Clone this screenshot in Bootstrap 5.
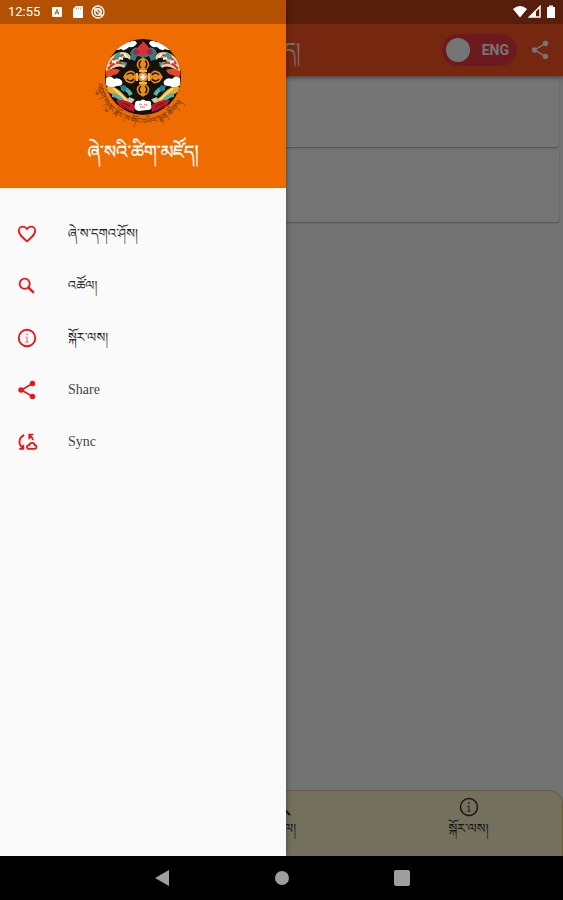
<!DOCTYPE html>
<html lang="dz">
<head>
<meta charset="utf-8">
<meta name="viewport" content="width=device-width, initial-scale=1">
<title>Dzongkha Dictionary</title>
<link href="https://cdn.jsdelivr.net/npm/bootstrap@5.3.0/dist/css/bootstrap.min.css" rel="stylesheet">
<style>
body{font-family:"Liberation Serif","Noto Serif Tibetan","Noto Sans Tibetan",serif;background:#000}
svg{display:block;flex:none}
.app-screen{background:#fafafa;min-height:0}
.app-bar{background:#ff5722;height:76px;padding:24px 12px 0;box-shadow:0 2px 4px rgba(0,0,0,.4);z-index:1}
.app-name{font-size:20px;line-height:32px;color:#fff}
.lang-toggle{background:#eb3a40;border-radius:16px;height:32px;padding:0 8px 0 4px;gap:12px;font:700 14px/20px Roboto,sans-serif;color:#fff}
.lang-toggle .knob{width:24px;height:24px;border-radius:50%;background:#fff}
.entry{background:#fff;border-radius:3px;margin:0 4px;min-height:71px;box-shadow:0 1px 2px rgba(0,0,0,.3)}
.tab-strip{background:#fcf3ce;border:1px solid #e8c878;border-bottom:0;border-radius:0 14px 0 0;height:66px}
.tab-strip a{font-size:13px;line-height:20px;color:#333}
.scrim{background:rgba(0,0,0,.54);z-index:2}
.status{background:rgba(0,0,0,.25);height:24px;z-index:4;font:400 13px/24px Roboto,sans-serif;color:#fff;padding:0 6px 0 8px}
.drawer{width:286px;background:#fafafa;z-index:3;box-shadow:0 0 6px rgba(0,0,0,.4)}
.drawer-head{background:#ef6c00;height:188px;padding-top:36px}
.drawer-head h1{font-size:18px;line-height:36px;color:#fff;-webkit-text-stroke:.3px #fff}
.drawer-menu{padding-top:20px}
.drawer-menu a{height:52px;padding-left:16px;gap:30px;font-size:13px;line-height:20px;color:#222}
.drawer-menu .latin{font-size:14px;color:#444}
.drawer-menu svg{color:#f01414}
.sys-nav{height:44px;background:#000}
.sys-nav button{color:#9e9e9e;width:120px}
</style>
<script src="https://cdn.jsdelivr.net/npm/bootstrap@5.3.0/dist/js/bootstrap.bundle.min.js"></script>
</head>
<body class="vh-100 d-flex flex-column overflow-hidden">
<div class="app-screen position-relative flex-grow-1 d-flex flex-column overflow-hidden">
  <header class="app-bar d-flex align-items-center">
    <div class="app-name flex-grow-1 text-center ps-4">ཞེ་སའི་ཚིག་མཛོད།</div>
    <button type="button" class="lang-toggle btn border-0 d-flex align-items-center"><span class="knob"></span>ENG</button>
    <button type="button" class="btn p-0 border-0 text-white ms-2 ps-1" aria-label="Share">
      <svg width="22" height="22" viewBox="0 0 24 24" fill="currentColor"><path d="M18 16.1c-.8 0-1.4.3-2 .8l-7.100-4.200c.1-.2.1-.5.1-.7s0-.5-.1-.7L16 7.200c.5.5 1.200.8 2 .8a3 3 0 1 0-3-3c0 .2 0 .5.1.7L8 9.800A3 3 0 1 0 6 15c.8 0 1.500-.3 2-.8l7.100 4.200c-.1.200-.1.400-.1.600a2.900 2.900 0 1 0 3-2.900z"/></svg>
    </button>
  </header>
  <main class="flex-grow-1 d-flex flex-column gap-1">
    <div class="entry"></div>
    <div class="entry"></div>
  </main>
  <nav class="tab-strip d-flex">
    <a href="#" class="w-100" aria-label="Home"></a>
    <a href="#" class="w-100 d-flex flex-column align-items-center text-decoration-none pt-1">
      <svg width="24" height="24" viewBox="0 0 24 24" fill="none" stroke="currentColor" stroke-width="2"><circle cx="9.500" cy="9.500" r="5.500"/><path d="M14 14l6 6"/></svg>འཚོལ།</a>
    <a href="#" class="w-100 d-flex flex-column align-items-center text-decoration-none pt-1">
      <svg width="24" height="24" viewBox="0 0 24 24" fill="none" stroke="currentColor" stroke-width="1.500"><circle cx="12" cy="12" r="8.500"/><path d="M10.500 11H12v5M10.500 16.300h3" stroke-width="1"/><circle cx="12" cy="8" r=".5" stroke-width="1"/></svg>སྐོར་ལས།</a>
  </nav>
  <div class="scrim position-absolute top-0 start-0 w-100 h-100"></div>
  <aside class="drawer position-absolute top-0 start-0 h-100">
    <div class="drawer-head d-flex flex-column align-items-center">
      <svg width="100" height="98" viewBox="0 0 100 98" role="img" aria-label="Emblem">
        <defs><clipPath id="disc"><circle cx="50" cy="41" r="38"/></clipPath><path id="rim" d="M3.500 48A47 47 0 0 0 96.500 48"/>
          <g id="prong"><path d="M0-4C-2-8-8-9-6-14C-5-18-2-18 0-20C2-18 5-18 6-14C8-9 2-8 0-4z" fill="#e58b1b"/><path d="M-2-9C-5-11-4-15-2-16M2-9C5-11 4-15 2-16" fill="none" stroke="#15110e" stroke-width="1.500"/><path d="M-4-6h8" stroke="#f3b548" stroke-width="2"/></g>
          <g id="side">
            <path d="M20 10q4-3 8 0 3-6 9-4 5-3 7 1-2 5-8 4-5 5-8 2-6 3-8-3z" fill="#fff"/>
            <path d="M13 30c2-8 8-13 16-14 7 0 11 5 8 8-4-4-10-3-11 2 5-1 8 2 5 6-5-3-11-1-18 5z" fill="#e6d2a0"/>
            <path d="M17 28c4-7 11-10 17-8M15 33c5-6 10-8 15-5" fill="none" stroke="#bf3836" stroke-width="2"/>
            <path d="M21 20l5-4 3 5-5 3zM29 27l5-1-1 5z" fill="#449b91"/>
            <path d="M26 22l4 1M31 18l3 3M19 25l4 2" stroke="#fff" stroke-width="2"/>
            <path d="M13 35q7-4 14-1-2 5-7 5-5 5-7 1z" fill="#dd4c25"/>
            <path d="M13 42q5-3 8 1 5-2 8 2 2 5-5 5-8 3-11-1z" fill="#fff"/>
            <path d="M14 51c8-1 12 3 16 7 4 5 8 6 12 5-3 6-10 5-14 1-5-5-9-5-14-9z" fill="#eda62c"/>
            <path d="M19 59c5 0 8 3 11 6M28 52c5 0 8 3 10 7" fill="none" stroke="#5ab0a5" stroke-width="4"/>
            <path d="M20 52l8 7 6 6" fill="none" stroke="#f5df72" stroke-width="2"/>
            <path d="M27 50l5-1 2 5-4 2z" fill="#2d7d92"/>
            <path d="M23 64q8-1 19 5l-1 7-14-5z" fill="#bd172b"/>
            <path d="M30 67l7 3M28 69l6 4" stroke="#5c1722" stroke-width="1"/>
            <path d="M38 18l6 2-2 5-5-2z" fill="#397b82"/><path d="M36 61l5 2-2 4-4-2z" fill="#b7d2c2"/>
          </g>
        </defs>
        <circle cx="50" cy="41" r="38" fill="#15110e"/>
        <g clip-path="url(#disc)">
          <use href="#side"/><use href="#side" transform="matrix(-1 0 0 1 100 0)"/>
          <path d="M37 17q4-7 8-5 5-7 10 0 6-2 9 5-4 6-8 3-6 3-10 0-6 2-9-3z" fill="#397b82"/>
          <path d="M50 5c3 4 7 5 6 10-1 5-10 6-12 1-2-5 4-6 6-11z" fill="#dc3038"/>
          <path d="M44 13q-4 0-4 5 5 2 7-2M56 13q4 0 4 5-5 2-7-2" fill="#a9273a"/>
          <g transform="translate(50 41)"><use href="#prong"/><use href="#prong" transform="rotate(90)"/><use href="#prong" transform="rotate(180)"/><use href="#prong" transform="rotate(270)"/><circle r="5" fill="#e58b1b"/><circle r="3" fill="#c9c2b4"/><path d="M-3 0h6M0-3v6" stroke="#fff" stroke-width="1"/></g>
          <path d="M42 68q0-4 5-3 3-3 6 0 6-1 5 4 2 5-4 5l-8 1q-6-1-4-7z" fill="#fff"/><path d="M46 69q2-2 3 0M51 69q3-2 3 1M47 71h5" stroke="#e66f3a" fill="none"/>
        </g>
        <text font-size="8" fill="#5a2c08"><textPath href="#rim" startOffset="0">འབྲུག་གཞུང་རྫོང་ཁ་གོང་འཕེལ་ལྷན་ཚོགས།</textPath></text>
      </svg>
      <h1 class="m-0 fw-normal">ཞེ་སའི་ཚིག་མཛོད།</h1>
    </div>
    <nav class="drawer-menu d-flex flex-column">
      <a href="#" class="d-flex align-items-center text-decoration-none"><svg width="22" height="22" viewBox="0 0 24 24" fill="none" stroke="currentColor" stroke-width="2"><path d="M12 20C6 15 3 12.300 3 8.500A4.500 4.500 0 0 1 7.500 4C9.300 4 11 5 12 6.500 13 5 14.700 4 16.500 4A4.500 4.500 0 0 1 21 8.500C21 12.300 18 15 12 20z"/></svg>ཞེ་ས་དགའ་ཤོས།</a>
      <a href="#" class="d-flex align-items-center text-decoration-none"><svg width="22" height="22" viewBox="0 0 24 24" fill="none" stroke="currentColor" stroke-width="2"><circle cx="9.500" cy="9.500" r="5.500"/><path d="M13.500 13.500l6 6" stroke-width="2.600"/></svg>འཚོལ།</a>
      <a href="#" class="d-flex align-items-center text-decoration-none"><svg width="22" height="22" viewBox="0 0 24 24" fill="none" stroke="currentColor" stroke-width="2"><circle cx="12" cy="12" r="9"/><path d="M10.500 11H12v5M10 16.500h4" stroke-width="1" opacity=".7"/><circle cx="12" cy="8" r=".5" stroke-width="1" opacity=".7"/></svg>སྐོར་ལས།</a>
      <a href="#" class="latin d-flex align-items-center text-decoration-none"><svg width="22" height="22" viewBox="0 0 24 24" fill="currentColor"><path d="M6 12L18 5M6 12l12 7" stroke="currentColor" stroke-width="1.800"/><circle cx="5.500" cy="12" r="3"/><circle cx="18" cy="5" r="3"/><circle cx="18" cy="19" r="3"/></svg>Share</a>
      <a href="#" class="latin d-flex align-items-center text-decoration-none"><svg width="22" height="22" viewBox="0 0 24 24" fill="none" stroke="currentColor" stroke-width="2"><path d="M9 4.500C3 7 2 14 7 18M3.500 19.500H8V15M18.500 10c-.2-2-1.200-3.500-3-4.500M19 4h-4.500v5"/><path d="M13.500 19.500H20a2 2 0 0 0 .5-4c-.5-3.500-5.500-3.500-6 0a2 2 0 0 0-1 4z"/></svg>Sync</a>
    </nav>
  </aside>
  <div class="status position-absolute top-0 start-0 w-100 d-flex align-items-center">
    <span class="me-2">12:55</span>
    <svg width="56" height="16" viewBox="0 0 56 16" class="ms-1"><rect y="3" x="0" width="10" height="10" rx="1" fill="#fff"/><path d="M3 10.500L5 5.500l2 5M3.500 9h3" stroke="#b15200" fill="none"/><path d="M24 2h6a1 1 0 0 1 1 1v10a1 1 0 0 1-1 1h-8a1 1 0 0 1-1-1V5z" fill="#fff"/><path d="M24.500 3.500v2M26.500 3.500v2M28.500 3.500v2" stroke="#d9a37c"/><circle cx="46" cy="8" r="6" fill="none" stroke="#fff" stroke-width="1.300"/><circle cx="46" cy="8" r="3.300" fill="none" stroke="#fff" stroke-width="1.500"/><path d="M42 4l8 8M46 4.500l3 3" stroke="#fff" stroke-width="1.300"/></svg>
    <span class="flex-grow-1"></span>
    <svg width="44" height="16" viewBox="0 0 44 16" fill="#fff"><path d="M0 5q7-6 14 0L7 13.500z"/><path d="M27 2.500v10.500H16.500z" fill="none" stroke="#fff" stroke-width="1.500"/><path d="M23 7v6h-6z"/><path d="M34 3h2V1.500h4V3h2v11h-8z"/></svg>
  </div>
</div>
<nav class="sys-nav d-flex justify-content-center flex-shrink-0">
  <button type="button" class="btn border-0 p-0 d-flex justify-content-center align-items-center" aria-label="Back"><svg width="16" height="16" viewBox="0 0 16 16" fill="currentColor"><path d="M1 8L15 0v16z"/></svg></button>
  <button type="button" class="btn border-0 p-0 d-flex justify-content-center align-items-center" aria-label="Home"><svg width="16" height="16" viewBox="0 0 16 16" fill="currentColor"><circle cx="8" cy="8" r="7"/></svg></button>
  <button type="button" class="btn border-0 p-0 d-flex justify-content-center align-items-center" aria-label="Overview"><svg width="16" height="16" viewBox="0 0 16 16" fill="currentColor"><rect width="16" height="16" rx="2"/></svg></button>
</nav>
</body>
</html>
